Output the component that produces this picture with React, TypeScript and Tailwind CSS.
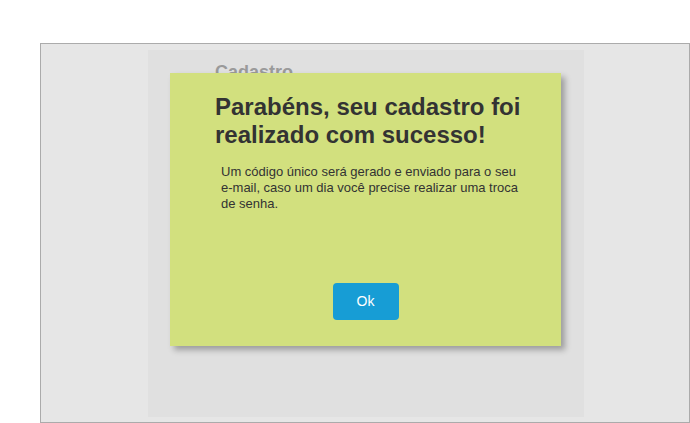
export default function App() {
    return (
        <div className="min-h-screen bg-white pt-[43px] pl-[40px]" style={{ fontFamily: '"Liberation Sans", Arial, sans-serif' }}>
            <div className="w-[650px] h-[380px] border border-[#ababab] bg-[#e6e6e6] pt-[6px] pl-[107px]">
                <div className="relative w-[436px] h-[367px] bg-[#e0e0e0]">
                    <h2 className="pl-[67px] pt-[12px] text-[18px] leading-[20px] font-bold text-[#9a9a9a]">Cadastro</h2>

                    <div className="absolute left-[22px] top-[23px] w-[391px] h-[273px] bg-[#d2e07e] shadow-[4px_4px_6px_rgba(0,0,0,0.3)] flex flex-col">
                        <h1 className="pl-[45px] pt-[20px] text-[24px] leading-[28px] font-bold text-[#333333]">
                            Parabéns, seu cadastro foi
                            <br />
                            realizado com sucesso!
                        </h1>
                        <p className="pl-[51px] pr-[40px] mt-[15px] text-[13px] leading-[16px] text-[#333333]">
                            Um código único será gerado e enviado para o seu e-mail, caso um dia você precise realizar uma troca de senha.
                        </p>
                        <div className="mt-auto mb-[26px] flex justify-center">
                            <button className="w-[66px] h-[37px] rounded-[4px] bg-[#179dd5] text-white text-[14px]">Ok</button>
                        </div>
                    </div>
                </div>
            </div>
        </div>
    );
}
